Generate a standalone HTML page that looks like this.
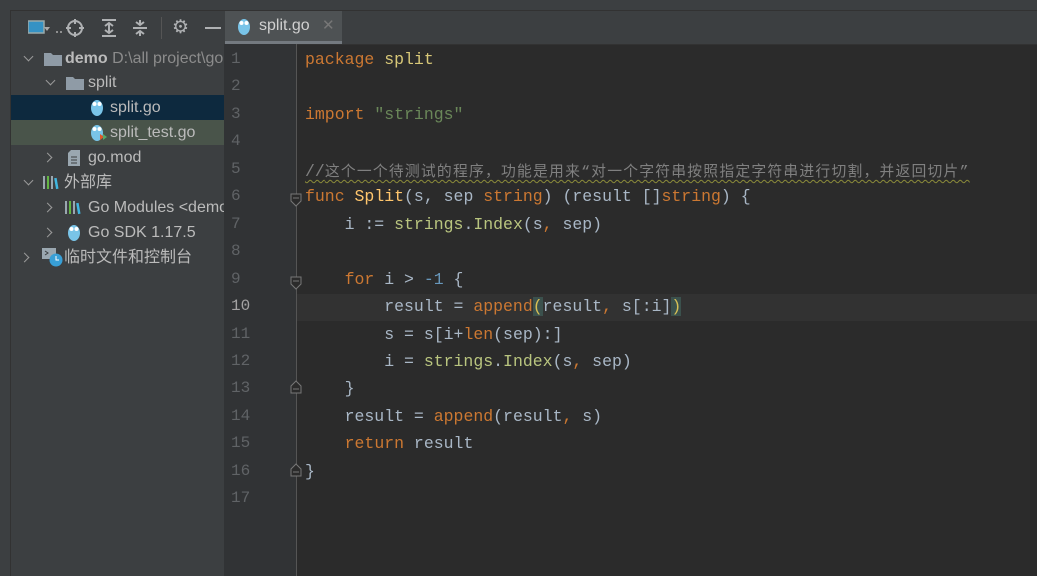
<!DOCTYPE html>
<html><head><meta charset="utf-8"><style>
body{margin:0;width:1037px;height:576px;overflow:hidden;background:#2b2b2b;font-family:"Liberation Sans","Noto Sans CJK SC",sans-serif;position:relative}
.top{position:absolute;left:0;top:0;width:1037px;height:10px;background:#3c3f41;border-bottom:1px solid #323232}
.strip{position:absolute;left:0;top:10px;width:10px;height:566px;background:#3c3f41;border-right:1px solid #323232}
.side{position:absolute;left:11px;top:11px;width:213px;height:565px;background:#3c3f41}
.tb{position:absolute;left:0;top:0;width:213px;height:33px;}
.row{position:absolute;left:0;width:213px;height:25px;line-height:25px;color:#bbbbbb;font-size:16px;white-space:nowrap;overflow:hidden}
.chev{position:absolute;width:6px;height:6px;border-right:1.5px solid #9a9a9a;border-bottom:1.5px solid #9a9a9a}
.down{transform:rotate(45deg)}
.right{transform:rotate(-45deg)}
.ic{position:absolute}
.gutter{position:absolute;left:224px;top:44px;width:72px;height:532px;background:#313335}
.vline{position:absolute;left:296px;top:44px;width:1px;height:532px;background:#555}
.tabbar{position:absolute;left:224px;top:11px;width:813px;height:33px;background:#3c3f41;border-bottom:1px solid #323232}
.tab{position:absolute;left:1px;top:0;width:117px;height:30px;background:#4e5254;border-bottom:3px solid #747a80}
.ln{position:absolute;left:231px;font-family:"Liberation Mono",monospace;font-size:16px;color:#606366}
.code{position:absolute;left:305px;font-family:"Liberation Mono",monospace;font-size:16.5px;color:#a9b7c6;white-space:pre}
.k{color:#cc7832}.s{color:#6a8759}.f{color:#ffc66d}.p{color:#b9c57f}.n{color:#6897bb}.b{color:#d6bf55}
.cmt{color:#808080;font-family:"Liberation Mono","Noto Sans CJK SC",monospace;text-decoration:underline wavy #8c8c3a;text-decoration-thickness:1px;text-underline-offset:3px}
.cj{font-size:14.8px;letter-spacing:1.22px}
.cur{position:absolute;left:297px;top:294px;width:740px;height:27px;background:#323232}
</style></head><body>
<div class="top"></div>
<div class="strip"></div>
<div class="side">
 <div class="tb">
  <svg class="ic" style="left:17px;top:7px" width="44" height="20"><rect x="0" y="3" width="16" height="12" fill="#3592c4" stroke="#9aa" stroke-width="1.5"/><path d="M16 9l6 0-3 4z" fill="#aaa"/><circle cx="29" cy="14" r="1" fill="#aaa"/><circle cx="33" cy="14" r="1" fill="#aaa"/></svg>
  <svg class="ic" style="left:54px;top:7px" width="20" height="20"><circle cx="10" cy="10" r="7" fill="none" stroke="#afb1b3" stroke-width="2"/><path d="M10 1v5M10 14v5M1 10h5M14 10h5" stroke="#afb1b3" stroke-width="2"/></svg>
  <svg class="ic" style="left:88px;top:7px" width="20" height="20"><path d="M3 2h14M3 18h14M10 5v10M6 8l4-3 4 3M6 12l4 3 4-3" stroke="#afb1b3" stroke-width="2" fill="none"/></svg>
  <svg class="ic" style="left:119px;top:7px" width="20" height="20"><path d="M3 10h14M10 2v5M10 13v5M6 4l4 3 4-3M6 16l4-3 4 3" stroke="#afb1b3" stroke-width="2" fill="none"/></svg>
  <div style="position:absolute;left:150px;top:6px;width:1px;height:22px;background:#555"></div>
  <div style="position:absolute;left:161px;top:5px;color:#afb1b3;font-size:19px">⚙</div>
  <div style="position:absolute;left:194px;top:16px;width:16px;height:2px;background:#afb1b3"></div>
 </div>
 <div class="row" style="top:35px"><div class="chev down" style="left:14px;top:7px"></div>
  <svg class="ic" style="left:32px;top:5px" width="20" height="16"><path d="M1 2h7l2 2h9v11H1z" fill="#8f9ba6"/></svg>
  <span style="position:absolute;left:54px"><b>demo</b> <span style="color:#8c8c8c">D:\all project\go</span></span></div>
 <div class="row" style="top:59px"><div class="chev down" style="left:36px;top:7px"></div>
  <svg class="ic" style="left:54px;top:5px" width="20" height="16"><path d="M1 2h7l2 2h9v11H1z" fill="#8f9ba6"/></svg>
  <span style="position:absolute;left:77px">split</span></div>
 <div class="row" style="top:84px;background:#0d293e">
  <svg class="ic" style="left:79px;top:3px" width="14" height="19"><ellipse cx="7" cy="10" rx="6" ry="8" fill="#79c4e8"/><circle cx="4.5" cy="6" r="2" fill="#fff"/><circle cx="9.5" cy="6" r="2" fill="#fff"/></svg>
  <span style="position:absolute;left:99px">split.go</span></div>
 <div class="row" style="top:109px;background:#49544a">
  <svg class="ic" style="left:79px;top:3px" width="18" height="19"><ellipse cx="7" cy="10" rx="6" ry="8" fill="#79c4e8"/><circle cx="4.5" cy="6" r="2" fill="#fff"/><circle cx="9.5" cy="6" r="2" fill="#fff"/><path d="M10 11l4 3-4 3z" fill="#e0582a"/><path d="M13 11l4 3-4 3z" fill="#59a869"/></svg>
  <span style="position:absolute;left:99px">split_test.go</span></div>
 <div class="row" style="top:134px"><div class="chev right" style="left:33px;top:9px"></div>
  <svg class="ic" style="left:56px;top:4px" width="14" height="18"><path d="M4 1h9v16H1V4z" fill="#9aa7b0"/><path d="M4 8h6M4 11h6M4 14h6" stroke="#3c3f41"/></svg>
  <span style="position:absolute;left:77px">go.mod</span></div>
 <div class="row" style="top:159px"><div class="chev down" style="left:14px;top:7px"></div>
  <svg class="ic" style="left:32px;top:5px" width="18" height="15"><rect x="0" y="1" width="2" height="13" fill="#9aa7b0"/><rect x="4" y="1" width="2" height="13" fill="#62b543"/><rect x="8" y="1" width="2" height="13" fill="#9aa7b0"/><rect x="12" y="3" width="2.5" height="11" fill="#40b6e0" transform="rotate(-10 13 8)"/></svg>
  <span style="position:absolute;left:53px">外部库</span></div>
 <div class="row" style="top:184px"><div class="chev right" style="left:33px;top:9px"></div>
  <svg class="ic" style="left:54px;top:5px" width="18" height="15"><rect x="0" y="1" width="2" height="13" fill="#9aa7b0"/><rect x="4" y="1" width="2" height="13" fill="#62b543"/><rect x="8" y="1" width="2" height="13" fill="#9aa7b0"/><rect x="12" y="3" width="2.5" height="11" fill="#40b6e0" transform="rotate(-10 13 8)"/></svg>
  <span style="position:absolute;left:77px">Go Modules &lt;demo&gt;</span></div>
 <div class="row" style="top:209px"><div class="chev right" style="left:33px;top:9px"></div>
  <svg class="ic" style="left:56px;top:3px" width="14" height="19"><ellipse cx="7" cy="10" rx="6" ry="8" fill="#79c4e8"/><circle cx="4.5" cy="6" r="2" fill="#fff"/><circle cx="9.5" cy="6" r="2" fill="#fff"/></svg>
  <span style="position:absolute;left:77px">Go SDK 1.17.5</span></div>
 <div class="row" style="top:234px"><div class="chev right" style="left:10px;top:9px"></div>
  <svg class="ic" style="left:31px;top:3px" width="22" height="20"><rect x="0" y="0" width="14" height="11" fill="#9aa7b0"/><path d="M3 3l3 2-3 2" stroke="#3c3f41" fill="none"/><circle cx="14" cy="12" r="6.5" fill="#389fd6"/><path d="M14 8v4h3" stroke="#fff" fill="none"/></svg>
  <span style="position:absolute;left:53px">临时文件和控制台</span></div>
</div>
<div class="tabbar"><div class="tab">
 <svg class="ic" style="left:12px;top:6px" width="14" height="19"><ellipse cx="7" cy="10" rx="6" ry="8" fill="#79c4e8"/><circle cx="4.5" cy="6" r="2" fill="#fff"/><circle cx="9.5" cy="6" r="2" fill="#fff"/></svg>
 <span style="position:absolute;left:34px;top:6px;color:#d0d0d0;font-size:16px">split.go</span>
 <span style="position:absolute;left:97px;top:5px;color:#777;font-size:15px">✕</span></div></div>
<div class="gutter"></div>
<div class="cur"></div>
<div class="vline"></div>
<div id="lines"></div>
<script>
var L=[
'<span class="k">package</span> <span class="f" style="color:#d8c878">split</span>',
'',
'<span class="k">import</span> <span class="s">"strings"</span>',
'',
'<span class="cmt">//<span class="cj">这个一个待测试的程序，功能是用来“对一个字符串按照指定字符串进行切割，并返回切片”</span></span>',
'<span class="k">func</span> <span class="f">Split</span>(s, sep <span class="k">string</span>) (result []<span class="k">string</span>) {',
'    i := <span class="p">strings</span>.<span class="p">Index</span>(s<span class="k">,</span> sep)',
'',
'    <span class="k">for</span> i &gt; <span class="n">-1</span> {',
'        result = <span class="k">append</span><span class="b" style="background:#3b514d">(</span>result<span class="k">,</span> s[:i]<span class="b" style="background:#3b514d">)</span>',
'        s = s[i+<span class="k">len</span>(sep):]',
'        i = <span class="p">strings</span>.<span class="p">Index</span>(s<span class="k">,</span> sep)',
'    }',
'    result = <span class="k">append</span>(result<span class="k">,</span> s)',
'    <span class="k">return</span> result',
'}',
''];
var h='';
for(var i=0;i<17;i++){var y=47+i*27.45;
h+='<div class="ln" style="top:'+(y+3)+'px;'+(i==9?'color:#a4a3a3':'')+'">'+(i+1)+'</div>';
h+='<div class="code" style="top:'+(y+3)+'px">'+L[i]+'</div>';}
[5,8].forEach(function(i){var y=46+i*27.45+10;h+='<svg class="ic" style="left:290px;top:'+y+'px" width="12" height="14"><path d="M1 1h10v7l-5 5-5-5z" fill="#2b2b2b" stroke="#777"/><path d="M3 5h6" stroke="#777"/></svg>';});
[12,15].forEach(function(i){var y=46+i*27.45+5;h+='<svg class="ic" style="left:290px;top:'+y+'px" width="12" height="14"><path d="M1 13h10V6L6 1 1 6z" fill="#2b2b2b" stroke="#777"/><path d="M3 9h6" stroke="#777"/></svg>';});
document.getElementById('lines').innerHTML=h;
</script>
</body></html>
